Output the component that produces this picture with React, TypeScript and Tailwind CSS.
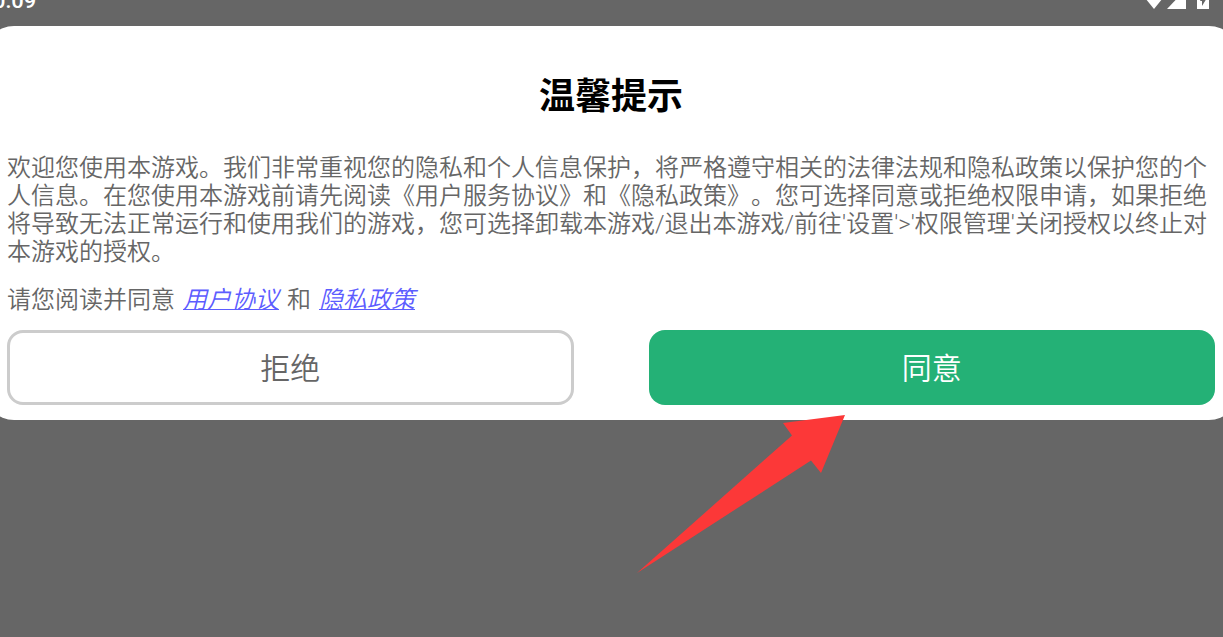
function StatusBar() {
  return (
    <header className="h-[26px] overflow-hidden">
      <div className="-mt-3 -ml-[7px] flex h-[25px] items-end justify-between pr-[14px] text-white">
        <time className="text-[22px] leading-6 font-medium">0:09</time>
        <div className="flex items-end pb-1">
          <svg className="h-5 w-[26px]" viewBox="0 0 26 20" fill="currentColor" aria-label="Wi-Fi">
            <path d="M13 20 0 4a20 20 0 0 1 26 0Z" />
          </svg>
          <svg className="h-5 w-[19px]" viewBox="0 0 19 20" fill="currentColor" aria-label="信号">
            <path d="M19 0v20H0Z" />
          </svg>
          <svg className="ml-[11px] h-5 w-3" viewBox="0 0 12 20" fill="currentColor" aria-label="电池">
            <path fillRule="evenodd" d="M1 2h3V0h4v2h3l1 1v17H0V3ZM7 5 3 12h2v5l4-6.500H7Z" />
          </svg>
        </div>
      </div>
    </header>
  );
}

function PointerArrow() {
  return (
    <svg
      className="pointer-events-none absolute top-[85px] -left-3 h-[158px] w-[208px]"
      viewBox="0 0 208 158"
      aria-hidden="true"
    >
      <path d="M208 0 146 8 155 20.500 0 158 174 45.500 184 58Z" fill="#fc3838" />
    </svg>
  );
}

export default function App() {
  return (
    <div className="min-h-screen overflow-hidden bg-[#666666] font-['Roboto','Noto_Sans_CJK_SC',sans-serif]">
      <StatusBar />
      <main
        role="dialog"
        aria-labelledby="notice-title"
        className="-mx-4 rounded-[30px] bg-white pt-[49px] pr-6 pb-[15px] pl-[23px] text-2xl leading-7 text-[#666666]"
      >
        <h1 id="notice-title" className="text-center text-4xl leading-[44px] font-bold text-black">
          温馨提示
        </h1>
        <div className="mt-[35px] font-[350] [text-spacing-trim:space-all]">
          <p>
            欢迎您使用本游戏。我们非常重视您的隐私和个人信息保护，将严格遵守相关的法律法规和隐私政策以保护您的个人信息。在您使用本游戏前请先阅读《用户服务协议》和《隐私政策》。您可选择同意或拒绝权限申请，如果拒绝将导致无法正常运行和使用我们的游戏，您可选择卸载本游戏/退出本游戏/前往'设置'&gt;'权限管理'关闭授权以终止对本游戏的授权。
          </p>
          <p className="mt-5 flex gap-2">
            <span>请您阅读并同意</span>
            <a href="#agreement" className="text-[#5c5cff] italic underline decoration-1">用户协议</a>
            <span>和</span>
            <a href="#privacy" className="text-[#5c5cff] italic underline decoration-1">隐私政策</a>
          </p>
        </div>
        <div className="mt-4 grid grid-cols-2 gap-[75px] text-3xl">
          <button type="button" className="h-[75px] rounded-2xl border-3 border-[#cccccc] pt-[2px] font-[350]">
            拒绝
          </button>
          <div className="relative">
            <button type="button" className="h-[75px] w-full rounded-2xl bg-[#24b176] pt-[2px] font-[350] text-white">
              同意
            </button>
            <PointerArrow />
          </div>
        </div>
      </main>
    </div>
  );
}
